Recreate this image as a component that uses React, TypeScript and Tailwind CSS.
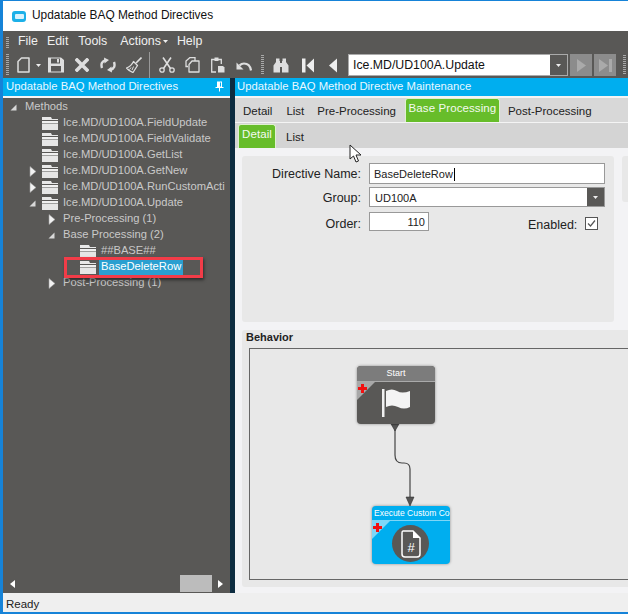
const font = "font-['Liberation_Sans',Arial,sans-serif]";

function Expand({ open }: { open?: boolean }) {
  if (open) {
    return (
      <svg width="7" height="7" viewBox="0 0 7 7" className="shrink-0">
        <path d="M6.500 0.500V6.500H0.500Z" fill="#d8d8d8" />
      </svg>
    );
  }
  return (
    <svg width="8" height="11" viewBox="0 0 8 11" className="shrink-0">
      <path d="M1 0.500L7 5.500L1 10.500Z" fill="#f2f2f2" stroke="#a0a0a0" strokeWidth="0.600" />
    </svg>
  );
}

function Folder() {
  return (
    <svg width="16" height="13" viewBox="0 0 16 13" className="shrink-0">
      <path d="M0 0H9L10 2H16V3H0Z" fill="#e8e8e8" />
      <path d="M0 4H16V6H0Z" fill="#f0f0f0" />
      <path d="M0 6.500H16V13H0Z" fill="#e6e6e6" />
    </svg>
  );
}

type Row = { label: string; indent: number; folder?: boolean; arrow?: "open" | "closed"; selected?: boolean };

const rows: Row[] = [
  { label: "Methods", indent: 7, arrow: "open" },
  { label: "Ice.MD/UD100A.FieldUpdate", indent: 39, folder: true },
  { label: "Ice.MD/UD100A.FieldValidate", indent: 39, folder: true },
  { label: "Ice.MD/UD100A.GetList", indent: 39, folder: true },
  { label: "Ice.MD/UD100A.GetNew", indent: 26, folder: true, arrow: "closed" },
  { label: "Ice.MD/UD100A.RunCustomActi", indent: 26, folder: true, arrow: "closed" },
  { label: "Ice.MD/UD100A.Update", indent: 26, folder: true, arrow: "open" },
  { label: "Pre-Processing (1)", indent: 45, arrow: "closed" },
  { label: "Base Processing (2)", indent: 45, arrow: "open" },
  { label: "##BASE##", indent: 77, folder: true },
  { label: "BaseDeleteRow", indent: 77, folder: true, selected: true },
  { label: "Post-Processing (1)", indent: 45, arrow: "closed" },
];

function TreeRow({ row }: { row: Row }) {
  return (
    <div className="flex h-4 items-center whitespace-nowrap" style={{ paddingLeft: row.indent }}>
      {row.arrow && (
        <span className="mr-[4px] flex w-[9px] justify-start">
          <Expand open={row.arrow === "open"} />
        </span>
      )}
      {row.folder && <Folder />}
      <span className={row.selected ? "ml-[3px] bg-[#2a9fd0] px-[2px] py-[2px] text-white" : row.folder ? "ml-[5px]" : "ml-[2px]"}>
        {row.label}
      </span>
    </div>
  );
}

function Grip({ className }: { className?: string }) {
  return <div className={`w-[3px] bg-[repeating-linear-gradient(#a8a8a8_0,#a8a8a8_1px,transparent_1px,transparent_2px)] ${className ?? ""}`} />;
}

function Caret() {
  return (
    <svg width="5" height="3" viewBox="0 0 5 3" className="shrink-0">
      <path d="M0 0H5L2.500 3Z" fill="#eee" />
    </svg>
  );
}

function TabLabel({ text, active, className }: { text: string; active?: boolean; className?: string }) {
  if (active) {
    return (
      <div className={`flex h-[24px] items-center justify-center rounded-t-[3px] border border-b-0 border-[#dff0d0] bg-[#67bd2a] pb-[3px] tracking-[0.1px] text-[#f4faf0] ${className ?? ""}`}>
        {text}
      </div>
    );
  }
  return <div className={`flex h-[24px] items-center pt-[4px] text-[#222] ${className ?? ""}`}>{text}</div>;
}

const ic = "#dedede";

function RedPlus() {
  return (
    <svg width="9" height="9" viewBox="0 0 9 9" className="absolute left-[1px] top-[2px]">
      <path d="M3 0H6V3H9V6H6V9H3V6H0V3H3Z" fill="#f21010" />
    </svg>
  );
}

export default function App() {
  return (
    <div className={`${font} relative flex h-[614px] w-[628px] flex-col overflow-hidden border-y-[2px] border-l-[3px] border-t-[1px] border-[#1683d8] bg-[#595856] text-[11.3px] leading-none`}>
      {/* title bar */}
      <div className="flex h-[30px] shrink-0 items-center bg-white pl-[9px] text-[#111]">
        <div className="flex h-[11px] w-[14px] items-center justify-center rounded-[3px] bg-[#1cb0e8]">
          <div className="h-[5px] w-[9px] rounded-[1px] bg-[#d8f2fc]" />
        </div>
        <span className="ml-[6px] text-[11.9px]">Updatable BAQ Method Directives</span>
      </div>

      {/* menu */}
      <div className="flex h-[21px] shrink-0 items-center pl-[3px] text-[12.4px] text-[#f0f0f0]">
        <Grip className="mt-[1px] h-[11px]" />
        <span className="ml-[9px]">File</span>
        <span className="ml-[9px]">Edit</span>
        <span className="ml-[10px]">Tools</span>
        <span className="ml-[13px] flex items-center gap-[2px]">
          Actions
          <Caret />
        </span>
        <span className="ml-[9px]">Help</span>
      </div>

      {/* toolbar */}
      <div className="flex h-[26px] shrink-0 items-center pl-[3px]">
        <Grip className="h-[22px]" />
        {/* new */}
        <svg width="13" height="16" viewBox="0 0 13 16" className="ml-[8px] shrink-0">
          <path d="M4.500 1H12V15H1V4.500Z" fill="none" stroke={ic} strokeWidth="1.500" strokeLinejoin="round" />
        </svg>
        <span className="ml-[6px] flex"><Caret /></span>
        {/* save */}
        <svg width="16" height="16" viewBox="0 0 16 16" className="ml-[7px] shrink-0">
          <path fillRule="evenodd" d="M0 0.500H13L16 3V15.500H0ZM3 1.500V6.500H12V1.500ZM3 9V14.500H13V9Z" fill={ic} />
          <rect x="9" y="2" width="2" height="3.500" fill={ic} />
        </svg>
        {/* delete */}
        <svg width="14" height="14" viewBox="0 0 14 14" className="ml-[11px] shrink-0">
          <path d="M2 2L12 12M12 2L2 12" stroke={ic} strokeWidth="3.600" strokeLinecap="square" />
        </svg>
        {/* refresh */}
        <svg width="16" height="16" viewBox="0 0 16 16" className="ml-[11px] shrink-0">
          <path d="M2 11Q0 5 5.500 3.200" fill="none" stroke={ic} strokeWidth="2.400" />
          <path d="M4 0.500L9 3L4.500 6.500Z" fill={ic} />
          <path d="M14 5Q16 11 10.500 12.800" fill="none" stroke={ic} strokeWidth="2.400" />
          <path d="M12 15.500L7 13L11.500 9.500Z" fill={ic} />
        </svg>
        {/* clear */}
        <svg width="16" height="16" viewBox="0 0 16 16" className="ml-[10px] shrink-0">
          <path d="M15.500 0.500L10 6" stroke={ic} strokeWidth="1.600" />
          <path d="M7.500 4.500L11.500 8.500L7 15.500Q3 14 0.500 11Q5 9.500 7.500 4.500Z" fill="none" stroke={ic} strokeWidth="1.300" strokeLinejoin="round" />
          <path d="M5 10.500L3.500 12.500M7.500 9.500L6 13" stroke={ic} strokeWidth="1" />
        </svg>
        <div className="ml-[7px] h-[26px] w-px shrink-0 bg-[#999]" />
        {/* cut */}
        <svg width="16" height="16" viewBox="0 0 16 16" className="ml-[9px] shrink-0">
          <circle cx="3" cy="13" r="2.200" fill="none" stroke={ic} strokeWidth="1.300" />
          <circle cx="13" cy="13" r="2.200" fill="none" stroke={ic} strokeWidth="1.300" />
          <path d="M4.500 11.500L12 0.500M11.500 11.500L4 0.500" stroke={ic} strokeWidth="1.600" />
        </svg>
        {/* copy */}
        <svg width="15" height="16" viewBox="0 0 15 16" className="ml-[10px] shrink-0">
          <path d="M3 9.500H1V4L5 0.500H10V4" fill="none" stroke={ic} strokeWidth="1.300" />
          <path d="M7 4H14V15H4V7.500Z" fill="none" stroke={ic} strokeWidth="1.300" strokeLinejoin="round" />
        </svg>
        {/* paste */}
        <svg width="14" height="16" viewBox="0 0 14 16" className="ml-[11px] shrink-0">
          <path d="M5 15H0.700V2.500H10.300V7" fill="none" stroke={ic} strokeWidth="1.300" />
          <rect x="3.500" y="0.500" width="4" height="3.500" fill={ic} />
          <path d="M7 9H12L13.500 10.500V15.500H7Z" fill={ic} />
        </svg>
        {/* undo */}
        <svg width="16" height="11" viewBox="0 0 16 11" className="ml-[11px] shrink-0">
          <path d="M15 10.500Q14 3.500 8 3.500Q5.500 3.500 3.500 5.500" fill="none" stroke={ic} strokeWidth="2.200" />
          <path d="M0.500 2.500V9.500H7.500Z" fill={ic} />
        </svg>
        <Grip className="ml-[9px] h-[20px] shrink-0" />
        {/* find */}
        <svg width="16" height="15" viewBox="0 0 16 15" className="ml-[9px] shrink-0">
          <path d="M3 0.500H6.500V3H7V14.500H0.500V7.500L3 4Z" fill={ic} />
          <path d="M9.500 0.500H13V4L15.500 7.500V14.500H9V3H9.500Z" fill={ic} />
          <rect x="7" y="5" width="2" height="4" fill={ic} />
        </svg>
        {/* first / previous */}
        <svg width="12" height="15" viewBox="0 0 12 15" className="ml-[13px] shrink-0">
          <path d="M0 0.500H3.500V14.500H0ZM12 0.500V14.500L4.500 7.500Z" fill="#eee" />
        </svg>
        <svg width="8" height="15" viewBox="0 0 8 15" className="ml-[15px] shrink-0">
          <path d="M8 0.500V14.500L0 7.500Z" fill="#eee" />
        </svg>
        {/* record combo */}
        <div className="ml-[11px] flex h-[22px] w-[220px] shrink-0 items-center border border-[#aaa] bg-white pl-[4px] text-[12.3px] text-[#111]">
          <span className="flex-1">Ice.MD/UD100A.Update</span>
          <div className="flex h-full w-[17px] items-center justify-center bg-[#595856]">
            <Caret />
          </div>
        </div>
        <div className="ml-[2px] flex h-[22px] w-[22px] shrink-0 items-center justify-center bg-[#8c8c8c]">
          <svg width="9" height="13" viewBox="0 0 9 13"><path d="M0 0L9 6.500L0 13Z" fill="#aaa" /></svg>
        </div>
        <div className="ml-[2px] flex h-[22px] w-[22px] shrink-0 items-center justify-center bg-[#8c8c8c]">
          <svg width="13" height="13" viewBox="0 0 13 13"><path d="M0 0L9 6.500L0 13ZM10 0H13V13H10Z" fill="#aaa" /></svg>
        </div>
        <Grip className="ml-[7px] h-[20px] shrink-0" />
      </div>

      {/* panels */}
      <div className="flex min-h-0 flex-1">
        {/* left: tree */}
        <div className="flex w-[227px] shrink-0 flex-col">
          <div className="flex h-[18px] shrink-0 items-center justify-between bg-[#00aeef] pb-[1px] pl-[3px] pr-[6px] text-[#e8f8ff]">
            <span>Updatable BAQ Method Directives</span>
            <svg width="9" height="11" viewBox="0 0 9 11">
              <path d="M2 0.500H7V6H8.500V7H5V10.500H4V7H0.500V6H2Z" fill="#fff" />
              <rect x="5" y="1.500" width="1" height="4" fill="#00aeef" />
            </svg>
          </div>
          <div className="h-[2px] shrink-0 bg-[#f4f4f4]" />
          <div className="relative flex-1 pt-[1px] text-[11.2px] text-[#c9c9c9]">
            {rows.map((r) => (
              <TreeRow key={r.label} row={r} />
            ))}
            {/* red highlight around the selected node */}
            <div className="absolute left-[61px] top-[159px] h-[21px] w-[139px] border-[3px] border-[#f23c48] shadow-[1px_2px_3px_rgba(0,0,0,0.5)]" />
            {/* horizontal scroll */}
            <div className="absolute bottom-[1px] left-[7px] right-[7px] flex h-[17px] items-center justify-between">
              <svg width="5" height="8" viewBox="0 0 5 8"><path d="M5 0V8L0 4Z" fill="#fff" /></svg>
              <div className="absolute left-[170px] h-[17px] w-[32px] bg-[#bcbcbc]" />
              <svg width="5" height="8" viewBox="0 0 5 8"><path d="M0 0V8L5 4Z" fill="#fff" /></svg>
            </div>
          </div>
        </div>

        {/* splitter */}
        <div className="w-[5px] shrink-0 bg-[#0d2c40]" />

        {/* right: maintenance */}
        <div className="flex min-w-0 flex-1 flex-col bg-[#f3f3f5]">
          <div className="flex h-[18px] shrink-0 items-center bg-[#00aeef] pb-[1px] pl-[2px] text-[#e8f8ff]">
            Updatable BAQ Method Directive Maintenance
          </div>
          <div className="h-[2px] shrink-0 bg-[#f4f4f4]" />
          <div className="flex h-[24px] shrink-0 items-end bg-[#d8d8d8] text-[11.5px]">
            <TabLabel text="Detail" className="ml-[8px]" />
            <TabLabel text="List" className="ml-[14px]" />
            <TabLabel text="Pre-Processing" className="ml-[13px]" />
            <TabLabel text="Base Processing" active className="ml-[9px] w-[95px]" />
            <TabLabel text="Post-Processing" className="ml-[8px]" />
          </div>
          <div className="h-px shrink-0 bg-[#f4f4f4]" />
          <div className="flex h-[25px] shrink-0 items-end bg-[#d4d4d4] text-[11.5px]">
            <TabLabel text="Detail" active className="ml-[3px] w-[38px]" />
            <TabLabel text="List" className="ml-[10px]" />
          </div>

          <div className="flex min-h-0 flex-1 flex-col gap-[8px] overflow-hidden pl-[7px] pt-[8px]">
            <div className="flex gap-[8px]">
              {/* form */}
              <div className="relative h-[166px] w-[372px] shrink-0 rounded-[3px] bg-[#e8e8e8] text-[12.5px] text-[#222]">
                <div className="flex flex-col gap-[3px] pl-[6px] pt-[7px]">
                  <div className="flex items-center">
                    <span className="w-[113px] whitespace-nowrap pt-[2px] text-right">Directive Name:</span>
                    <div className="ml-[8px] flex h-[21px] w-[236px] items-center border border-[#999] bg-white pl-[4px] pt-[2px] text-[11px]">
                      BaseDeleteRow<span className="ml-px h-[13px] w-px bg-black" />
                    </div>
                  </div>
                  <div className="flex items-center">
                    <span className="w-[113px] pt-[2px] text-right">Group:</span>
                    <div className="ml-[8px] flex h-[20px] w-[236px] items-center justify-between border border-[#999] bg-white pl-[5px] text-[11px]">
                      <span className="pt-[2px]">UD100A</span>
                      <div className="flex h-full w-[17px] items-center justify-center bg-[#595856]">
                        <Caret />
                      </div>
                    </div>
                  </div>
                  <div className="flex items-start pt-[2px]">
                    <span className="w-[113px] pt-[6px] text-right">Order:</span>
                    <div className="ml-[8px] flex h-[19px] w-[60px] items-center justify-end border border-[#999] bg-white pr-[3px] pt-[2px] text-[11px]">
                      110
                    </div>
                    <span className="ml-[99px] pt-[7px]">Enabled:</span>
                    <div className="ml-[8px] mt-[5px] flex h-[13px] w-[13px] items-center justify-center border border-[#555] bg-white">
                      <svg width="9" height="9" viewBox="0 0 9 9"><path d="M1 4.500L3.500 7L8 1.500" fill="none" stroke="#555" strokeWidth="1.200" /></svg>
                    </div>
                  </div>
                </div>
              </div>
              <div className="h-[46px] flex-1 rounded-l-[3px] bg-[#e8e8e8]" />
            </div>

            {/* behavior */}
            <div className="flex h-[257px] shrink-0 flex-col rounded-l-[3px] bg-[#e8e8e8] pb-[7px]">
              <div className="flex h-[18px] shrink-0 items-center pb-[4px] pl-[4px] text-[11px] font-bold text-[#222]">Behavior</div>
              <div className="relative ml-[7px] flex-1 border border-r-0 border-[#666] bg-[#e8e8e8]">
                <svg width="130" height="100" viewBox="0 0 130 100" className="absolute left-[106px] top-[70px]">
                  <path d="M39 8V36Q39 44 46 44H48Q54 44 54 50V80" fill="none" stroke="#444" strokeWidth="1.200" />
                  <path d="M35 5H43L39 12Z" fill="#555" stroke="#222" strokeWidth="0.500" />
                  <path d="M50 78H58L54 87Z" fill="#555" stroke="#222" strokeWidth="0.500" />
                </svg>

                {/* Start */}
                <div className="absolute left-[107px] top-[17px] flex h-[58px] w-[78px] flex-col overflow-hidden rounded-[4px] bg-[#595856] shadow-[0_0_3px_rgba(0,0,0,0.4)]">
                  <div className="flex h-[16px] shrink-0 items-center justify-center border-b border-[#aaa] bg-[#7c7c7c] text-[9px] text-white">Start</div>
                  <div className="relative flex-1">
                    <div className="absolute left-0 top-0 h-0 w-0 border-r-[18px] border-t-[18px] border-r-transparent border-t-[#a8a8a8]" />
                    <RedPlus />
                    <svg width="30" height="30" viewBox="0 0 30 30" className="absolute left-[25px] top-[6px]">
                      <rect x="0" y="1" width="2.500" height="28" fill="#f0f0f0" />
                      <path d="M4 3Q10 0 15 3T28 3V19Q22 22 16 19T4 19Z" fill="#f4f4f4" />
                    </svg>
                  </div>
                </div>

                {/* Execute Custom Code */}
                <div className="absolute left-[122px] top-[157px] flex h-[58px] w-[78px] flex-col overflow-hidden rounded-[4px] bg-[#00aeef] shadow-[0_0_3px_rgba(0,0,0,0.4)]">
                  <div className="flex h-[15px] shrink-0 items-center overflow-hidden whitespace-nowrap border-b border-[#7fd6f7] pl-[2px] pt-[1px] text-[8.5px] text-white">Execute Custom Code</div>
                  <div className="relative flex-1">
                    <div className="absolute left-0 top-0 h-0 w-0 border-r-[18px] border-t-[18px] border-r-transparent border-t-[#7fd6f7]" />
                    <RedPlus />
                    <div className="absolute left-[20px] top-[4px] flex h-[37px] w-[37px] items-center justify-center rounded-full bg-[#595856]">
                      <svg width="22" height="28" viewBox="0 0 22 28">
                        <path d="M3 1H13L20 8V24Q20 27 17 27H5Q2 27 2 24V3Q2 1 3 1Z" fill="none" stroke="#fff" strokeWidth="1.500" />
                        <path d="M13 1V8H20Z" fill="#fff" />
                        <text x="11" y="22" textAnchor="middle" fontSize="13" fill="#fff" fontFamily="Liberation Sans">#</text>
                      </svg>
                    </div>
                  </div>
                </div>
              </div>
            </div>
          </div>
        </div>
      </div>

      {/* status */}
      <div className="flex h-[19px] shrink-0 items-center bg-[#efefef] pl-[3px] pt-[4px] text-[11.5px] text-[#222]">Ready</div>

      {/* mouse pointer */}
      <svg width="14" height="20" viewBox="0 0 14 20" className="absolute left-[346px] top-[143px]">
        <path d="M1 1V15L4.500 12L7 18L9.500 17L7 11H12Z" fill="#fff" stroke="#222" strokeWidth="1" />
      </svg>
    </div>
  );
}
